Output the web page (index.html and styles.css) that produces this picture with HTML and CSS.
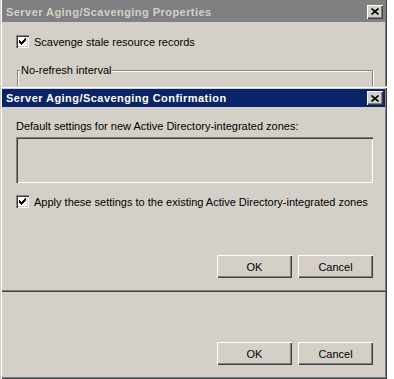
FILE: index.html
```html
<!DOCTYPE html>
<html lang="en">
<head>
    <meta charset="UTF-8">
    <title>Server Aging/Scavenging</title>
    <link rel="stylesheet" href="styles.css">
</head>
<body>
    <div class="window outer">
        <div class="titlebar inactive">
            <span>Server Aging/Scavenging Properties</span>
            <span class="close">
                <svg width="8" height="7" viewBox="0 0 8 7"><path d="M0.5 0.5 L7.5 6.5 M7.5 0.5 L0.5 6.5" stroke="#000" stroke-width="1.6" fill="none"/></svg>
            </span>
        </div>
        <div class="body">
            <label class="check-row first">
                <span class="checkbox">
                    <svg width="7" height="7" viewBox="0 0 7 7"><path d="M0 2h1v1h1v1h1v-1h1v-1h1v-1h1v-1h1v3h-1v1h-1v1h-1v1h-1v1h-1v-1h-1v-1h-1z" fill="#000"/></svg>
                </span>
                Scavenge stale resource records
            </label>
            <div class="groupbox">
                <span class="legend">No-refresh interval</span>
            </div>
            <div class="spacer"></div>
            <div class="buttons">
                <button class="btn">OK</button>
                <button class="btn">Cancel</button>
            </div>
        </div>

        <!-- confirmation dialog shown over the properties window -->
        <div class="window confirm">
            <div class="titlebar active">
                <span>Server Aging/Scavenging Confirmation</span>
                <span class="close">
                    <svg width="8" height="7" viewBox="0 0 8 7"><path d="M0.5 0.5 L7.5 6.5 M7.5 0.5 L0.5 6.5" stroke="#000" stroke-width="1.6" fill="none"/></svg>
                </span>
            </div>
            <div class="body">
                <p class="caption">Default settings for new Active Directory-integrated zones:</p>
                <div class="sunken"></div>
                <label class="check-row">
                    <span class="checkbox">
                        <svg width="7" height="7" viewBox="0 0 7 7"><path d="M0 2h1v1h1v1h1v-1h1v-1h1v-1h1v-1h1v3h-1v1h-1v1h-1v1h-1v1h-1v-1h-1v-1h-1z" fill="#000"/></svg>
                    </span>
                    Apply these settings to the existing Active Directory-integrated zones
                </label>
                <div class="spacer"></div>
                <div class="buttons">
                    <button class="btn">OK</button>
                    <button class="btn">Cancel</button>
                </div>
            </div>
        </div>
    </div>
</body>
</html>
```

FILE: styles.css
```css
body {
    margin: 0;
    background-color: #fff;
    font-family: "Liberation Sans", Arial, sans-serif;
    font-size: 11px;
    color: #000;
}

.window {
    box-sizing: border-box;
    width: 387px;
    background-color: #d4d0c8;
    padding: 0 2px 2px 2px;
    display: flex;
    flex-direction: column;
    box-shadow: inset 1px 0 #d4d0c8, inset 2px 0 #fff, inset -1px -1px #404040, inset -2px -2px #808080;
}

.outer {
    position: relative;
    height: 379px;
}

.confirm {
    position: absolute;
    top: 86px;
    left: 0;
    height: 206px;
    padding-top: 3px;
    box-shadow: inset 1px 1px #d4d0c8, inset 2px 2px #fff, inset -1px -1px #404040, inset -2px -2px #808080;
}

.titlebar {
    display: flex;
    align-items: center;
    justify-content: space-between;
    padding: 0 2px 0 4px;
    font-weight: bold;
    font-size: 11px;
    letter-spacing: 0.45px;
}

.titlebar.inactive {
    height: 21px;
    padding-top: 1px;
    background-color: #808080;
    color: #d4d0c8;
}

.titlebar.active {
    height: 18px;
    background-color: #0a246a;
    color: #fff;
}

.close {
    width: 16px;
    height: 14px;
    box-sizing: border-box;
    background-color: #d4d0c8;
    display: flex;
    align-items: center;
    justify-content: center;
    box-shadow: inset 1px 1px #fff, inset -1px -1px #404040, inset -2px -2px #808080;
}

.body {
    flex: 1;
    display: flex;
    flex-direction: column;
    padding: 0 12px 0 14px;
}

.check-row {
    display: flex;
    align-items: center;
    gap: 5px;
    height: 13px;
}

.check-row.first {
    margin-top: 13px;
}

.checkbox {
    width: 13px;
    height: 13px;
    box-sizing: border-box;
    background-color: #fff;
    display: flex;
    align-items: center;
    justify-content: center;
    box-shadow: inset 1px 1px #808080, inset 2px 2px #404040, inset -1px -1px #fff, inset -2px -2px #d4d0c8;
}

.groupbox {
    margin: 22px 0 0 1px;
    height: 40px;
    border: 1px solid #808080;
    border-bottom: none;
    box-shadow: inset 1px 1px #fff, 1px 0 #fff;
    position: relative;
}

.legend {
    position: absolute;
    top: -7px;
    left: 2px;
    padding: 0 1px;
    background-color: #d4d0c8;
}

.caption {
    margin: 13px 0 0 0;
    height: 13px;
}

.sunken {
    height: 46px;
    margin: 4px 0 12px 0;
    box-shadow: inset 1px 1px #808080, inset 2px 2px #404040, inset -1px -1px #fff, inset -2px -2px #d4d0c8;
}

.spacer {
    flex: 1;
}

.buttons {
    display: flex;
    justify-content: flex-end;
    gap: 6px;
    margin-bottom: 12px;
}

.btn {
    width: 75px;
    height: 23px;
    border: none;
    background-color: #d4d0c8;
    font-family: "Liberation Sans", Arial, sans-serif;
    font-size: 11px;
    color: #000;
    box-shadow: inset 1px 1px #fff, inset -1px -1px #404040, inset -2px -2px #808080;
}
```
